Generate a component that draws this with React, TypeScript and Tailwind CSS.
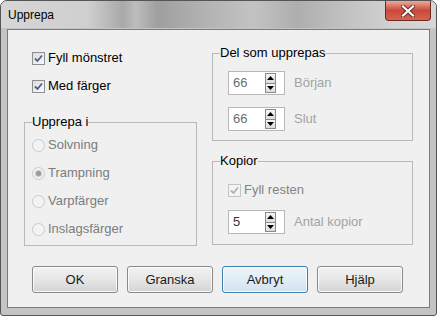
import React from 'react'

const font = { fontFamily: '"Liberation Sans", Arial, sans-serif' }

function CheckBox({ label, disabled }: { label: string; disabled?: boolean }) {
  return (
    <div className="flex h-[20px] items-center">
      <div
        className={`flex h-[13px] w-[13px] items-center justify-center border ${
          disabled ? 'border-[#c4c4c4] bg-[#f4f4f4]' : 'border-[#8e8f8f] bg-gradient-to-br from-[#dcdcdc] to-[#fbfbfb]'
        }`}
      >
        <svg width="9" height="9" viewBox="0 0 9 9">
          <path
            d="M1 4.5 L3.5 7 L8 1.5"
            fill="none"
            stroke={disabled ? '#b0b0b0' : '#4a5c94'}
            strokeWidth="1.8"
          />
        </svg>
      </div>
      <span className={`ml-[3px] text-[13px] ${disabled ? 'text-[#838383]' : 'text-black'}`}>{label}</span>
    </div>
  )
}

function Radio({ label, checked }: { label: string; checked?: boolean }) {
  return (
    <div className="flex h-[20px] items-center">
      <div className="flex h-[13px] w-[13px] items-center justify-center rounded-full border border-[#c9c9c9] bg-[#f3f3f3]">
        {checked && <div className="h-[5px] w-[5px] rounded-full bg-[#9c9c9c] ring-1 ring-[#c8c8c8]" />}
      </div>
      <span className="ml-[3px] text-[13px] text-[#7c7c7c]">{label}</span>
    </div>
  )
}

function Spinner({ value, label, dark }: { value: string; label: string; dark?: boolean }) {
  return (
    <div className="flex items-center">
      <div className="flex h-[24px] w-[57px] items-center border border-[#b8b8b8] bg-white pl-[4px] pr-[8px]">
        <span className={`flex-1 text-[13px] ${dark ? 'text-[#333]' : 'text-[#6d6d6d]'}`}>{value}</span>
        <div className="flex h-[20px] w-[11px] flex-col">
          <div className="flex flex-1 items-center justify-center border border-[#8a8a8a] bg-gradient-to-b from-[#f6f6f6] to-[#dcdcdc]">
            <svg width="7" height="4" viewBox="0 0 7 4">
              <path d="M0 4 L3.5 0 L7 4 Z" fill="#000" />
            </svg>
          </div>
          <div className="flex flex-1 items-center justify-center border border-t-0 border-[#8a8a8a] bg-gradient-to-b from-[#f6f6f6] to-[#dcdcdc]">
            <svg width="7" height="4" viewBox="0 0 7 4">
              <path d="M0 0 L7 0 L3.5 4 Z" fill="#000" />
            </svg>
          </div>
        </div>
      </div>
      <span className="ml-[9px] text-[13px] text-[#a3a3a3]">{label}</span>
    </div>
  )
}

function Group({ title, className, children }: { title: string; className?: string; children: React.ReactNode }) {
  return (
    <fieldset className={`border border-[#b9b9b9] pl-[7px] ${className ?? ''}`}>
      <legend className="text-[13px] leading-[16px] text-black">{title}</legend>
      {children}
    </fieldset>
  )
}

function Button({ label, isDefault }: { label: string; isDefault?: boolean }) {
  return (
    <button
      className={`h-[27px] w-[86px] rounded-[3px] border text-[13px] text-[#1a1a1a] shadow-[inset_0_0_0_1px_rgba(255,255,255,0.8)] ${
        isDefault
          ? 'border-[#3c7fb1] bg-gradient-to-b from-[#eef5fa] via-[#e2edf5] to-[#d2e2ee]'
          : 'border-[#8a8a8a] bg-gradient-to-b from-[#f2f2f2] via-[#e6e6e6] to-[#d3d3d3]'
      }`}
    >
      {label}
    </button>
  )
}

export default function App() {
  return (
    <div className="h-[316px] w-[437px] bg-white" style={font}>
      <div className="flex h-full flex-col rounded-t-[7px] rounded-b-[3px] border border-[#555] bg-[#c4c4c4]">
        <div className="flex h-[27px] items-start justify-between rounded-t-[6px] bg-[linear-gradient(90deg,#d6d6d6_0%,#cfcfcf_20%,#a9a9a9_28%,#bdbdbd_31%,#9f9f9f_36%,#b4b4b4_48%,#c3c3c3_58%,#aeaeae_68%,#bcbcbc_76%,#d2d2d2_90%,#d6d6d6_100%)]">
          <span className="ml-[7px] mt-[7px] text-[12px] leading-[14px] text-black">Upprepa</span>
          <div className="mr-[5px] flex h-[20px] w-[46px] items-center justify-center rounded-b-[4px] border border-t-0 border-[#6b2a22] bg-gradient-to-b from-[#e9a99c] via-[#c9493a] to-[#d6634f]">
            <svg width="14" height="12" viewBox="0 0 14 12">
              <path d="M2 1.5 L12 10.5 M12 1.5 L2 10.5" stroke="#5a2a24" strokeWidth="4" strokeLinecap="square" />
              <path d="M2 1.5 L12 10.5 M12 1.5 L2 10.5" stroke="#fff" strokeWidth="2.2" strokeLinecap="square" />
            </svg>
          </div>
        </div>
        <div className="mx-[6px] mb-[7px] mt-[1px] flex flex-1 flex-col border border-[#7a7a7a] bg-[#f0f0f0]">
          <div className="flex pl-[16px]">
            <div className="flex w-[173px] flex-col pt-[18px]">
              <div className="ml-[8px] flex flex-col gap-[8px]">
                <CheckBox label="Fyll mönstret" />
                <CheckBox label="Med färger" />
              </div>
              <Group title="Upprepa i" className="mt-[18px] pb-[6px]">
                <div className="mt-[5px] flex flex-col gap-[8px]">
                  <Radio label="Solvning" />
                  <Radio label="Trampning" checked />
                  <Radio label="Varpfärger" />
                  <Radio label="Inslagsfärger" />
                </div>
              </Group>
            </div>
            <div className="ml-[15px] flex w-[201px] flex-col pt-[15px]">
              <Group title="Del som upprepas" className="pb-[9px]">
                <div className="ml-[8px] mt-[10px] flex flex-col gap-[12px]">
                  <Spinner value="66" label="Början" />
                  <Spinner value="66" label="Slut" />
                </div>
              </Group>
              <Group title="Kopior" className="mt-[12px] pb-[10px]">
                <div className="ml-[8px] mt-[11px] flex flex-col gap-[10px]">
                  <CheckBox label="Fyll resten" disabled />
                  <Spinner value="5" label="Antal kopior" dark />
                </div>
              </Group>
            </div>
          </div>
          <div className="mt-[20px] flex gap-[9px] pl-[24px]">
            <Button label="OK" />
            <Button label="Granska" />
            <Button label="Avbryt" isDefault />
            <Button label="Hjälp" />
          </div>
        </div>
      </div>
    </div>
  )
}
